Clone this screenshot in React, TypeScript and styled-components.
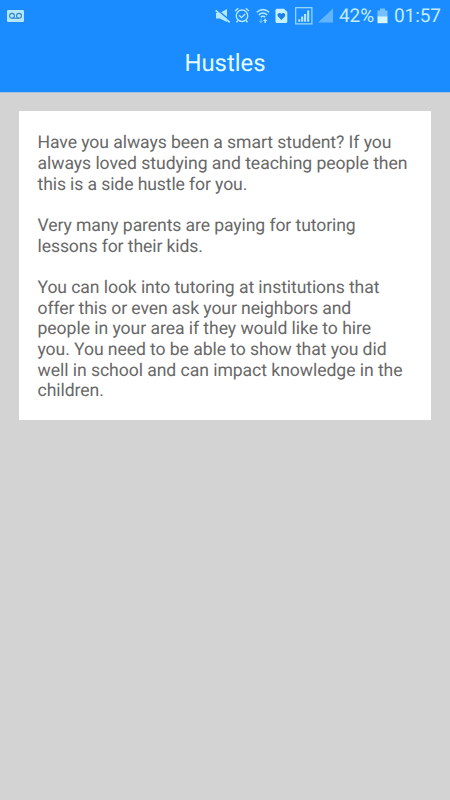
import React from "react";
import styled, { createGlobalStyle } from "styled-components";

const GlobalStyle = createGlobalStyle`
  body {
    margin: 0;
    background: #d3d3d3;
    font-family: Roboto, "Liberation Sans", sans-serif;
    text-rendering: geometricPrecision;
  }
`;

const Screen = styled.div`
  width: 450px;
  height: 800px;
  overflow: hidden;
  background: #d3d3d3;
`;

const Header = styled.header`
  height: 92px;
  background: #1a8cff;
  border-bottom: 1px solid #a9c4e0;
`;

const StatusBar = styled.div`
  display: flex;
  align-items: center;
  height: 31px;
  padding: 0 9px 0 7px;
  box-sizing: border-box;
  color: #c2ecff;
`;

const StatusIcon = styled.svg<{ $gap?: number }>`
  flex: none;
  display: block;
  margin-left: ${(p) => p.$gap ?? 0}px;
`;

const Spacer = styled.div`
  flex: 1;
`;

const StatusText = styled.span<{ $gap: number; $width: number }>`
  flex: none;
  width: ${(p) => p.$width}px;
  margin-left: ${(p) => p.$gap}px;
  font-size: 19px;
  line-height: 31px;
  letter-spacing: -0.1px;
  white-space: nowrap;
`;

const Title = styled.h1`
  margin: 0;
  height: 61px;
  line-height: 64px;
  text-align: center;
  font-size: 23.9px;
  font-weight: 400;
  color: #e3fbff;
`;

const Card = styled.main`
  margin: 18px 19px 0;
  height: 309px;
  padding: 22.4px 0 0 18.5px;
  box-sizing: border-box;
  background: #fff;
`;

const Paragraph = styled.p`
  margin: 0 0 20.65px;
  font-size: 17.6px;
  line-height: 20.65px;
  color: #686868;
`;

const Line = styled.span<{ $tracking: number }>`
  display: block;
  white-space: nowrap;
  letter-spacing: ${(p) => p.$tracking}px;
`;

const paragraphs: { text: string; tracking: number }[][] = [
  [
    { text: "Have you always been a smart student? If you", tracking: -0.07 },
    { text: "always loved studying and teaching people then", tracking: -0.055 },
    { text: "this is a side hustle for you.", tracking: -0.11 },
  ],
  [
    { text: "Very many parents are paying for tutoring", tracking: -0.1 },
    { text: "lessons for their kids.", tracking: -0.1 },
  ],
  [
    { text: "You can look into tutoring at institutions that", tracking: -0.09 },
    { text: "offer this or even ask your neighbors and", tracking: -0.105 },
    { text: "people in your area if they would like to hire", tracking: -0.055 },
    { text: "you. You need to be able to show that you did", tracking: -0.08 },
    { text: "well in school and can impact knowledge in the", tracking: -0.055 },
    { text: "children.", tracking: -0.07 },
  ],
];

const Voicemail = () => (
  <StatusIcon width="17" height="12" viewBox="0 0 17 12">
    <rect width="17" height="12" rx="1.2" fill="#b5e8ff" />
    <g fill="none" stroke="#2f83c8" strokeWidth="1.1">
      <circle cx="5" cy="5.8" r="2.4" />
      <circle cx="12" cy="5.8" r="2.4" />
      <path d="M5 8.2H12" />
    </g>
  </StatusIcon>
);

const Muted = () => (
  <StatusIcon width="16" height="16" viewBox="0 0 16 16">
    <path d="M1 5h3.8L12 1v13L4.8 10.5H1z" fill="#b5e8ff" />
    <path d="M1.3 1.1L15.6 13" stroke="#1a8cff" strokeWidth="1.5" />
    <path d="M.6 2.3L14.8 14.4" stroke="#b5e8ff" strokeWidth="1.6" />
  </StatusIcon>
);

const Alarm = () => (
  <StatusIcon $gap={3} width="16" height="17" viewBox="0 0 15 16">
    <g fill="none" stroke="#b5e8ff" strokeWidth="1.3">
      <circle cx="7.5" cy="8.2" r="5.4" />
      <path d="M1 3.8L4 1.2M14 3.8L11 1.2M3.8 12.5L2.3 14.5M11.2 12.5l1.5 2M4.8 7.8L7 10l3.5-3.5" />
    </g>
  </StatusIcon>
);

const Wifi = () => (
  <StatusIcon $gap={6} width="14" height="16" viewBox="0 0 14 16">
    <g fill="none" stroke="#b5e8ff" strokeWidth="1.5">
      <path d="M.8 4.2Q7-1 13.2 4.2M2.8 6.8Q7 3.3 11.2 6.8M4.8 9.2Q7 7.4 9.2 9.2" />
    </g>
    <path d="M5 10.5v4M3.5 12.8L5 14.5l1.5-1.7" fill="none" stroke="#66b9fc" strokeWidth="1.2" />
    <path d="M9.2 15v-3" stroke="#b5e8ff" strokeWidth="1.6" />
    <path d="M7 13L9.2 10.4l2.2 2.6z" fill="#b5e8ff" />
  </StatusIcon>
);

const HeartCard = () => (
  <StatusIcon $gap={5} width="13" height="16" viewBox="0 0 13 16">
    <path d="M2 .7h7L12.3 4v9.5q0 1.5-1.5 1.5H2Q.5 15 .5 13.5V2.2Q.5.7 2 .7z" fill="#c7f0ff" />
    <path d="M6.4 12L3 8.5C1.3 6.3 4.5 3.7 6.4 6c1.9-2.3 5.1.3 3.4 2.5z" fill="#1a7fe8" />
  </StatusIcon>
);

const BoxedSignal = () => (
  <StatusIcon $gap={7} width="18" height="18" viewBox="0 0 18 18">
    <rect x=".7" y=".7" width="16.2" height="16.2" fill="none" stroke="#9adcff" strokeWidth="1.2" />
    <path d="M4.3 14.7v-2.5M7.2 14.7V9.5M10.1 14.7V7M13.2 14.7V3.5" stroke="#b5e8ff" strokeWidth="2.1" />
  </StatusIcon>
);

const WeakSignal = () => (
  <StatusIcon $gap={5} width="15" height="15" viewBox="0 0 15 15">
    <path d="M0 14.5L15 .5v14z" fill="#62b5fc" />
  </StatusIcon>
);

const Battery = () => (
  <StatusIcon $gap={4} width="11" height="16" viewBox="0 0 11 16">
    <path d="M3 .5h5v2h2.5V9H.5V2.5H3z" fill="#76c0fc" />
    <path d="M.5 8.5h10v6.7H.5z" fill="#d5f6ff" />
  </StatusIcon>
);

export default function App() {
  return (
    <>
      <GlobalStyle />
      <Screen>
        <Header>
          <StatusBar>
            <Voicemail />
            <Spacer />
            <Muted />
            <Alarm />
            <Wifi />
            <HeartCard />
            <BoxedSignal />
            <WeakSignal />
            <StatusText $gap={6} $width={34}>42%</StatusText>
            <Battery />
            <StatusText $gap={6} $width={47}>01:57</StatusText>
          </StatusBar>
          <Title>Hustles</Title>
        </Header>
        <Card>
          {paragraphs.map((lines) => (
            <Paragraph key={lines[0].text}>
              {lines.map(({ text, tracking }) => (
                <Line key={text} $tracking={tracking}>
                  {text}
                </Line>
              ))}
            </Paragraph>
          ))}
        </Card>
      </Screen>
    </>
  );
}
